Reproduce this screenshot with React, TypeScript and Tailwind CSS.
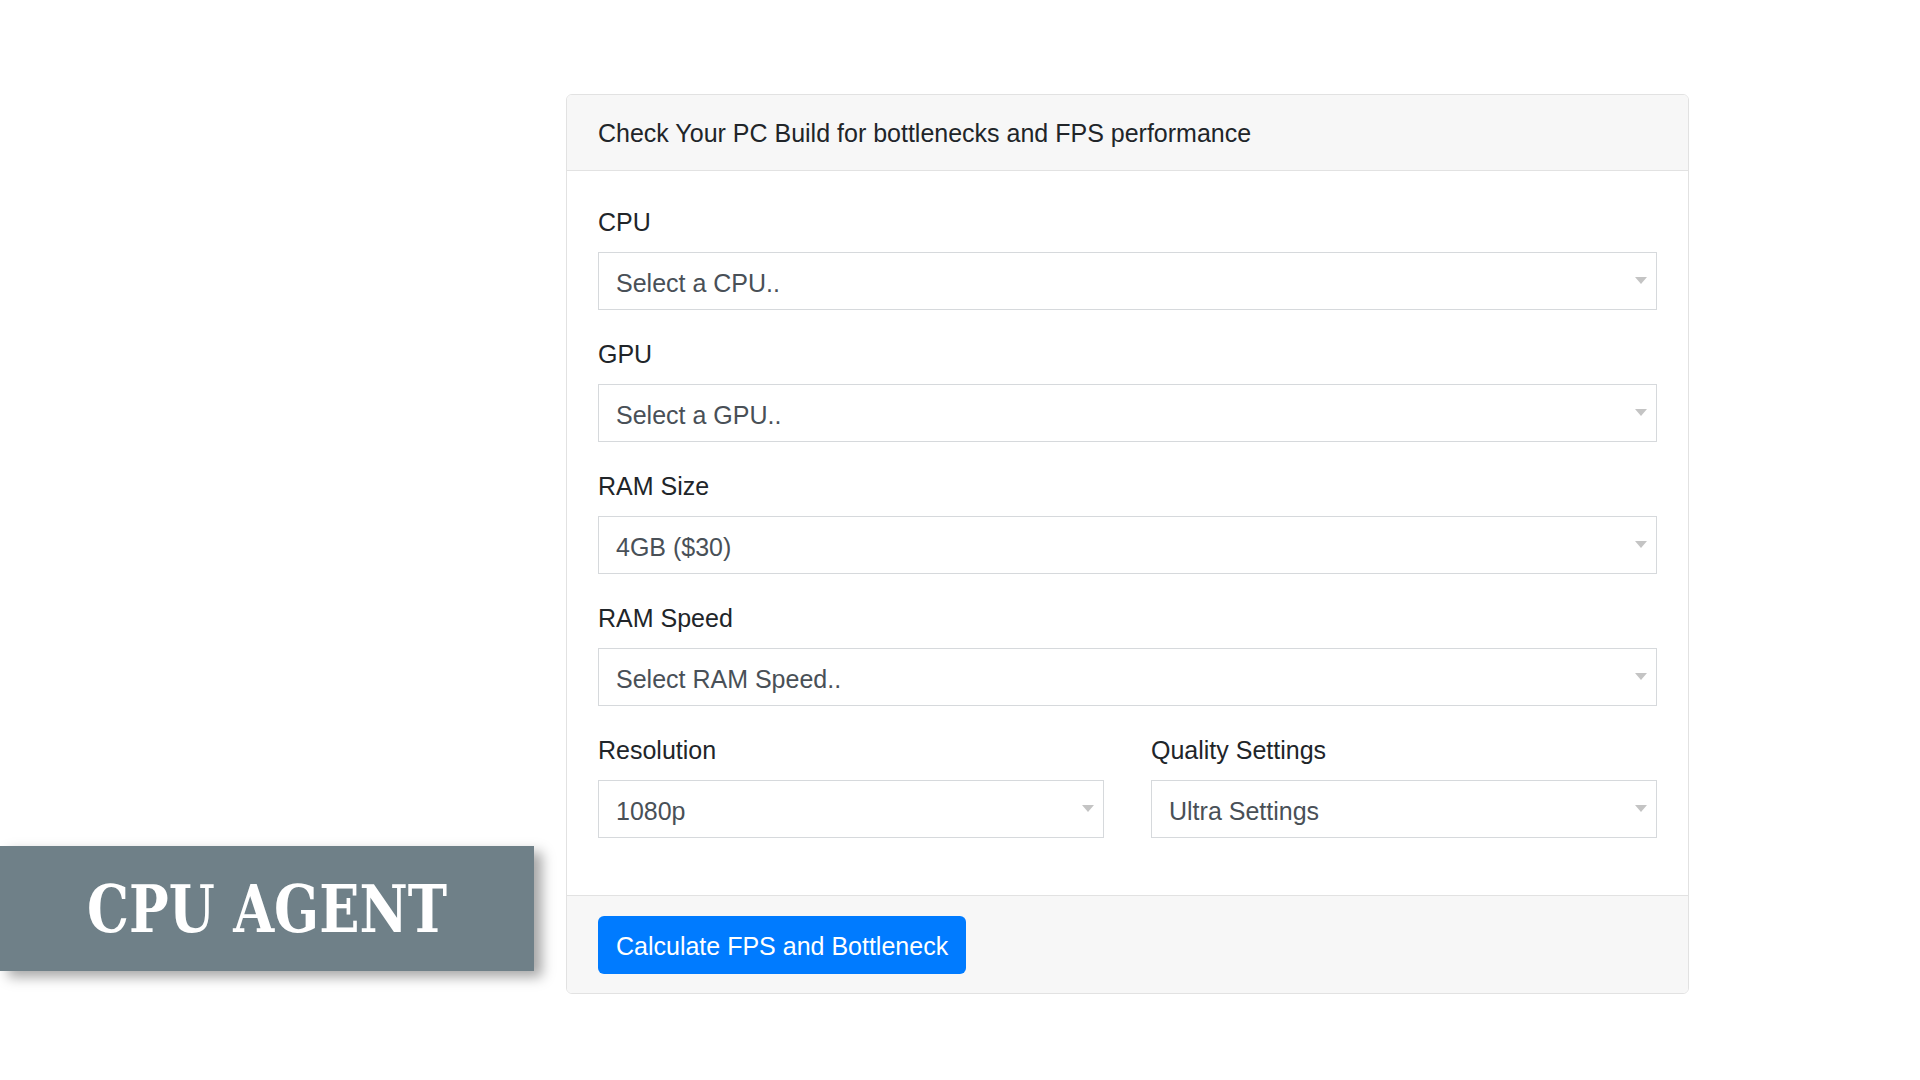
import React from "react";

function Arrow() {
    return (
        <svg width="12" height="8" viewBox="0 0 12 8" className="shrink-0">
            <path d="M0 0 L12 0 L6 7 Z" fill="#c4c4c4" />
        </svg>
    );
}

function SelectBox({ value }: { value: string }) {
    return (
        <div className="flex h-[58px] w-full items-center justify-between border-[1.5px] border-[#d6d9dc] bg-white pl-[17px] pr-[9px] text-[25px] text-[#495057]">
            <span className="pt-[5px]">{value}</span>
            <Arrow />
        </div>
    );
}

function Field({ label, value }: { label: string, value: string }) {
    return (
        <div className="mb-[26px]">
            <label className="mb-[11px] block leading-[37px] text-[#212529]">{label}</label>
            <SelectBox value={value} />
        </div>
    );
}

export default function App() {
    return (
        <div className="relative min-h-[1080px] w-[1920px] bg-white font-['Liberation_Sans',Helvetica,Arial,sans-serif] text-[25px]">
            <div className="pl-[566px] pt-[94px]">
                <div className="w-[1123px] overflow-hidden rounded-[6px] border-[1.5px] border-[#e2e2e2]">
                    <div className="border-b-[1.5px] border-[#e2e2e2] bg-[#f7f7f7] px-[31px] pt-[20px] pb-[18px] leading-[37px] text-[#212529]">
                        Check Your PC Build for bottlenecks and FPS performance
                    </div>
                    <div className="bg-white px-[31px] pt-[33px] pb-[31px]">
                        <Field label="CPU" value="Select a CPU.." />
                        <Field label="GPU" value="Select a GPU.." />
                        <Field label="RAM Size" value="4GB ($30)" />
                        <Field label="RAM Speed" value="Select RAM Speed.." />
                        <div className="grid grid-cols-2 gap-x-[47px]">
                            <Field label="Resolution" value="1080p" />
                            <Field label="Quality Settings" value="Ultra Settings" />
                        </div>
                    </div>
                    <div className="border-t-[1.5px] border-[#e2e2e2] bg-[#f7f7f7] px-[31px] pt-[20px] pb-[19px]">
                        <button className="h-[58px] rounded-[6px] bg-[#007bff] px-[18px] pt-[3px] text-[25px] text-white">
                            Calculate FPS and Bottleneck
                        </button>
                    </div>
                </div>
            </div>

            {/* watermark overlay */}
            <div className="absolute left-0 top-[846px] flex h-[125px] w-[534px] items-center justify-center bg-[#6f8088] shadow-[8px_6px_12px_rgba(0,0,0,0.35)]">
                <span className="inline-block scale-x-[0.8] font-['DejaVu_Serif',serif] text-[66px] leading-none font-bold whitespace-nowrap text-white">
                    CPU AGENT
                </span>
            </div>
        </div>
    );
}
